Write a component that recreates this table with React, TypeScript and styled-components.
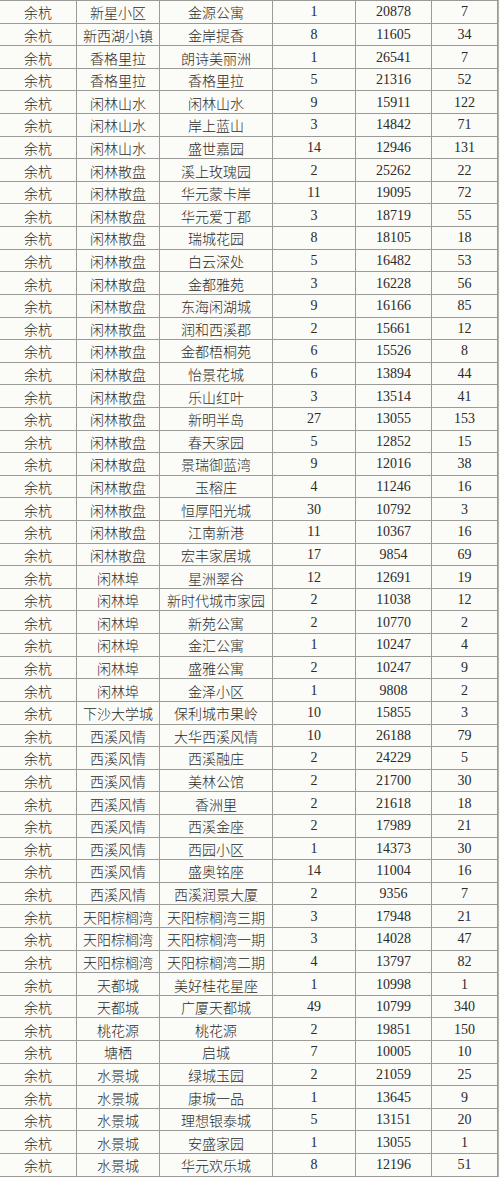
import React from "react";
import styled, { createGlobalStyle } from "styled-components";

const Global = createGlobalStyle`
  html, body { margin: 0; padding: 0; background: #fbfbf8; }
  body { font-family: "Liberation Serif", "Noto Sans CJK SC", serif; }
`;

const rows: [string, string, string, number, number, number][] = [
  ["余杭", "新星小区", "金源公寓", 1, 20878, 7],
  ["余杭", "新西湖小镇", "金岸提香", 8, 11605, 34],
  ["余杭", "香格里拉", "朗诗美丽洲", 1, 26541, 7],
  ["余杭", "香格里拉", "香格里拉", 5, 21316, 52],
  ["余杭", "闲林山水", "闲林山水", 9, 15911, 122],
  ["余杭", "闲林山水", "岸上蓝山", 3, 14842, 71],
  ["余杭", "闲林山水", "盛世嘉园", 14, 12946, 131],
  ["余杭", "闲林散盘", "溪上玫瑰园", 2, 25262, 22],
  ["余杭", "闲林散盘", "华元蒙卡岸", 11, 19095, 72],
  ["余杭", "闲林散盘", "华元爱丁郡", 3, 18719, 55],
  ["余杭", "闲林散盘", "瑞城花园", 8, 18105, 18],
  ["余杭", "闲林散盘", "白云深处", 5, 16482, 53],
  ["余杭", "闲林散盘", "金都雅苑", 3, 16228, 56],
  ["余杭", "闲林散盘", "东海闲湖城", 9, 16166, 85],
  ["余杭", "闲林散盘", "润和西溪郡", 2, 15661, 12],
  ["余杭", "闲林散盘", "金都梧桐苑", 6, 15526, 8],
  ["余杭", "闲林散盘", "怡景花城", 6, 13894, 44],
  ["余杭", "闲林散盘", "乐山红叶", 3, 13514, 41],
  ["余杭", "闲林散盘", "新明半岛", 27, 13055, 153],
  ["余杭", "闲林散盘", "春天家园", 5, 12852, 15],
  ["余杭", "闲林散盘", "景瑞御蓝湾", 9, 12016, 38],
  ["余杭", "闲林散盘", "玉榕庄", 4, 11246, 16],
  ["余杭", "闲林散盘", "恒厚阳光城", 30, 10792, 3],
  ["余杭", "闲林散盘", "江南新港", 11, 10367, 16],
  ["余杭", "闲林散盘", "宏丰家居城", 17, 9854, 69],
  ["余杭", "闲林埠", "星洲翠谷", 12, 12691, 19],
  ["余杭", "闲林埠", "新时代城市家园", 2, 11038, 12],
  ["余杭", "闲林埠", "新苑公寓", 2, 10770, 2],
  ["余杭", "闲林埠", "金汇公寓", 1, 10247, 4],
  ["余杭", "闲林埠", "盛雅公寓", 2, 10247, 9],
  ["余杭", "闲林埠", "金泽小区", 1, 9808, 2],
  ["余杭", "下沙大学城", "保利城市果岭", 10, 15855, 3],
  ["余杭", "西溪风情", "大华西溪风情", 10, 26188, 79],
  ["余杭", "西溪风情", "西溪融庄", 2, 24229, 5],
  ["余杭", "西溪风情", "美林公馆", 2, 21700, 30],
  ["余杭", "西溪风情", "香洲里", 2, 21618, 18],
  ["余杭", "西溪风情", "西溪金座", 2, 17989, 21],
  ["余杭", "西溪风情", "西园小区", 1, 14373, 30],
  ["余杭", "西溪风情", "盛奥铭座", 14, 11004, 16],
  ["余杭", "西溪风情", "西溪润景大厦", 2, 9356, 7],
  ["余杭", "天阳棕榈湾", "天阳棕榈湾三期", 3, 17948, 21],
  ["余杭", "天阳棕榈湾", "天阳棕榈湾一期", 3, 14028, 47],
  ["余杭", "天阳棕榈湾", "天阳棕榈湾二期", 4, 13797, 82],
  ["余杭", "天都城", "美好桂花星座", 1, 10998, 1],
  ["余杭", "天都城", "广厦天都城", 49, 10799, 340],
  ["余杭", "桃花源", "桃花源", 2, 19851, 150],
  ["余杭", "塘栖", "启城", 7, 10005, 10],
  ["余杭", "水景城", "绿城玉园", 2, 21059, 25],
  ["余杭", "水景城", "康城一品", 1, 13645, 9],
  ["余杭", "水景城", "理想银泰城", 5, 13151, 20],
  ["余杭", "水景城", "安盛家园", 1, 13055, 1],
  ["余杭", "水景城", "华元欢乐城", 8, 12196, 51],
];

const Sheet = styled.div`
  width: 498px;
  display: grid;
  grid-template-columns: 77px 83px 113px 83px 76px 66px;
  grid-auto-rows: 22.62px;
  border-top: 1px solid #9a9a96;
  border-right: 1px solid #b5b5b0;
`;

const Cell = styled.div<{ $first?: boolean; $num?: boolean }>`
  display: flex;
  align-items: center;
  justify-content: center;
  box-sizing: border-box;
  border-bottom: 1px solid #9a9a96;
  border-right: 1px solid #9a9a96;
  color: #2a2a28;
  font-size: 14px;
  font-family: ${(p) =>
    p.$num
      ? `"Liberation Serif", serif`
      : `"Noto Sans CJK SC", sans-serif`};
  font-weight: ${(p) => (p.$num ? 400 : 300)};
  white-space: nowrap;
  overflow: hidden;
  line-height: 1;
  padding-top: 1px;
`;

export default function App() {
  return (
    <>
      <Global />
      <Sheet>
        {rows.map((r, i) => (
          <React.Fragment key={i}>
            <Cell>{r[0]}</Cell>
            <Cell>{r[1]}</Cell>
            <Cell>{r[2]}</Cell>
            <Cell $num>{r[3]}</Cell>
            <Cell $num>{r[4]}</Cell>
            <Cell $num>{r[5]}</Cell>
          </React.Fragment>
        ))}
      </Sheet>
    </>
  );
}
